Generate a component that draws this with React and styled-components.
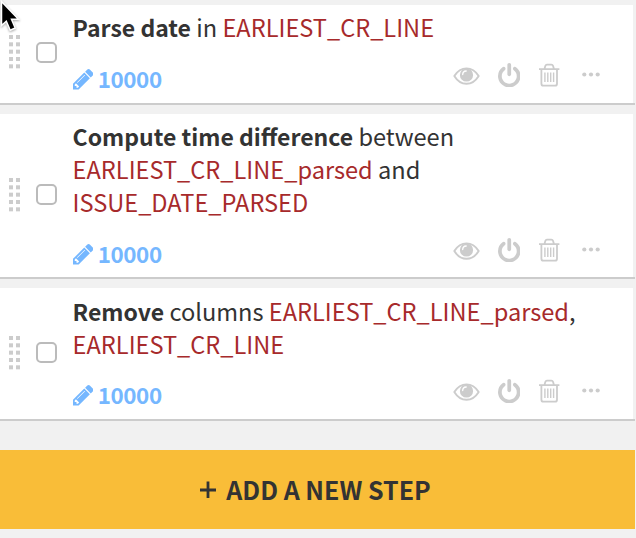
import React from 'react';
import styled, { createGlobalStyle } from 'styled-components';

const GlobalStyle = createGlobalStyle`
  * { box-sizing: border-box; }
  body {
    margin: 0;
    background: #f1f1f1;
    color: #333;
    font-family: "Noto Sans CJK SC", "Noto Sans", sans-serif;
  }
`;

const Page = styled.main`
  width: 635px;
  padding-top: 5px;
`;

const StepList = styled.ul`
  display: flex;
  flex-direction: column;
  gap: 9px;
  margin: 0;
  padding: 0;
  list-style: none;
`;

const Card = styled.li`
  border-bottom: 2px solid #ccc;
  padding-right: 2px;
`;

const CardBody = styled.div`
  display: flex;
  height: ${(p) => p.$height}px;
  background: #fff;
`;

const Gutter = styled.div`
  display: flex;
  align-items: center;
  gap: 16px;
  width: 72.6px;
  padding: 0 0 ${(p) => p.$lift}px 9px;
  flex: none;
`;

const Checkbox = styled.span`
  width: 21px;
  height: 21px;
  border: 2px solid #bbb;
  border-radius: 5px;
  background: #fff;
`;

const Content = styled.div`
  display: flex;
  flex: 1;
  flex-direction: column;
  justify-content: space-between;
  padding: ${(p) => p.$top}px 32px ${(p) => p.$bottom}px 0;
`;

const Title = styled.div`
  font-size: 23.6px;
  line-height: 33px;
  white-space: nowrap;
`;

const Processor = styled.b`
  font-size: 23px;
  line-height: 1;
`;

const Column = styled.span`
  color: #a72a2b;
`;

const Footer = styled.div`
  display: flex;
  align-items: center;
  justify-content: space-between;
  height: 33px;
`;

const Count = styled.div`
  display: flex;
  align-items: center;
  gap: 4.6px;
  color: #75b7ff;
  font-size: 22.4px;
  font-weight: 700;
  letter-spacing: -0.4px;
  line-height: 33px;
`;

const CountValue = styled.span`
  padding-bottom: 2px;
`;

const Actions = styled.div`
  display: flex;
  align-items: center;
  height: 24px;
  margin-bottom: 9px;
  color: #ccc;
`;

const Action = styled.span`
  display: flex;
  align-items: center;
  height: 24px;
  margin-left: ${(p) => p.$gap || 0}px;
`;

const AddStep = styled.button`
  display: flex;
  align-items: center;
  justify-content: center;
  gap: 10px;
  width: 100%;
  height: 79px;
  margin-top: 29px;
  padding: 0 4px 2px 0;
  border: 0;
  background: #f9bd38;
  color: #333;
  font: 700 25px "Noto Sans CJK SC", "Noto Sans", sans-serif;
`;

const Cursor = styled.svg`
  position: absolute;
  left: 0;
  top: 0;
  filter: drop-shadow(0 1px 1px rgba(0, 0, 0, 0.35));
`;

const Handle = () => (
  <svg width="11" height="34" fill="#ccc">
    {[0, 7.33, 14.67, 22, 29.33].map((y) => (
      <g key={y}>
        <rect x="0" y={y} width="4" height="4" />
        <rect x="7" y={y} width="4" height="4" />
      </g>
    ))}
  </svg>
);

const Pencil = () => (
  <svg width="20.5" height="20.5" viewBox="128 149 1515 1515" fill="currentColor">
    <path fillRule="evenodd" d="M491 1536l91-91-235-235-91 91v107h128v128h107zm523-928q0-22-22-22-10 0-17 7l-542 542q-7 7-7 17 0 22 22 22 10 0 17-7l542-542q7-7 7-17zm-54-192l416 416-832 832h-416v-416zm683 96q0 53-37 90l-166 166-416-416 166-165q36-38 90-38 53 0 91 38l235 234q37 39 37 91z" />
  </svg>
);

const Eye = () => (
  <svg width="27" height="24" viewBox="0 0 27 24" fill="none">
    <path d="M1.3 13C4.5 8 8.8 5.4 13.5 5.4S22.5 8 25.7 13C22.5 18.2 18.2 20.8 13.5 20.8S4.5 18.2 1.3 13Z" stroke="currentColor" strokeWidth="1.9" strokeLinejoin="round" />
    <circle cx="13.5" cy="12" r="6.6" fill="currentColor" />
    <path d="M9.7 11.6c0-2.2 1.3-3.5 3.5-3.6" stroke="#fff" strokeWidth="1.3" strokeLinecap="round" />
  </svg>
);

const Power = () => (
  <svg width="22.5" height="24.4" viewBox="128 0 1536 1664" fill="currentColor">
    <path d="M1664 896q0 156-61 298t-164 245-245 164-298 61-298-61-245-164-164-245-61-298q0-182 80.5-343t226.5-270q43-32 95.5-25t83.5 50q32 42 24.5 94.5t-49.5 84.5q-98 74-151.5 181t-53.5 228q0 104 40.5 198.5t109.5 163.5 163.5 109.5 198.5 40.5 198.5-40.5 163.5-109.5 109.5-163.5 40.5-198.5q0-121-53.5-228t-151.5-181q-42-32-49.5-84.5t24.5-94.5q31-43 84-50t95 25q146 109 226.5 270t80.5 343zm-640-768v640q0 52-38 90t-90 38-90-38-38-90v-640q0-52 38-90t90-38 90 38 38 90z" />
  </svg>
);

const Trash = () => (
  <svg width="21" height="24" viewBox="0 0 21 24" fill="none" stroke="currentColor" strokeWidth="1.8">
    <path d="M0 6.2h20.4M5.5 5.7 6.4 2.8q.4-1.2 1.5-1.2h4.6q1.1 0 1.5 1.2l.9 2.9M2.4 6.2v14.2q0 2.3 2 2.3h11.6q2 0 2-2.3V6.2" />
    <path d="M5.9 9.6v9.4M8.8 9.6v9.4M11.7 9.6v9.4M14.6 9.6v9.4" strokeWidth="1.4" />
  </svg>
);

const Dots = () => (
  <svg width="19" height="24" fill="currentColor">
    <circle cx="2.3" cy="11.5" r="2.1" />
    <circle cx="9" cy="11.5" r="2.1" />
    <circle cx="15.7" cy="11.5" r="2.1" />
  </svg>
);

const Plus = () => (
  <svg width="16" height="18" viewBox="0 0 16 18" stroke="currentColor" strokeWidth="2.8">
    <path d="M0 10h16M8 1.5v16.5" />
  </svg>
);

function Step({ height, top = 6, bottom = 7, lift = 2, children }) {
  return (
    <Card>
      <CardBody $height={height}>
        <Gutter $lift={lift}>
          <Handle />
          <Checkbox role="checkbox" aria-checked="false" />
        </Gutter>
        <Content $top={top} $bottom={bottom}>
          <Title>{children}</Title>
          <Footer>
            <Count><Pencil /><CountValue>10000</CountValue></Count>
            <Actions>
              <Action><Eye /></Action>
              <Action $gap={18}><Power /></Action>
              <Action $gap={18.5}><Trash /></Action>
              <Action $gap={22.5}><Dots /></Action>
            </Actions>
          </Footer>
        </Content>
      </CardBody>
    </Card>
  );
}

export default function App() {
  return (
    <>
      <GlobalStyle />
      <Page>
        <StepList>
          <Step height={98} lift={4}>
            <Processor>Parse date</Processor> in <Column>EARLIEST_CR_LINE</Column>
          </Step>
          <Step height={163} bottom={6}>
            <Processor>Compute time difference</Processor> between<br />
            <Column>EARLIEST_CR_LINE_parsed</Column> and<br />
            <Column>ISSUE_DATE_PARSED</Column>
          </Step>
          <Step height={131} top={7}>
            <Processor>Remove</Processor> columns <Column>EARLIEST_CR_LINE_parsed</Column>,<br />
            <Column>EARLIEST_CR_LINE</Column>
          </Step>
        </StepList>
        <AddStep><Plus />ADD A NEW STEP</AddStep>
      </Page>
      <Cursor width="22" height="34" viewBox="0 0 22 34">
        <path d="M1.500 1.500V25.500L6.300 21.300l3.900 8.900 5-2.200L11.500 19.300h7Z" fill="#000" stroke="#fff" strokeWidth="1.500" />
      </Cursor>
    </>
  );
}
